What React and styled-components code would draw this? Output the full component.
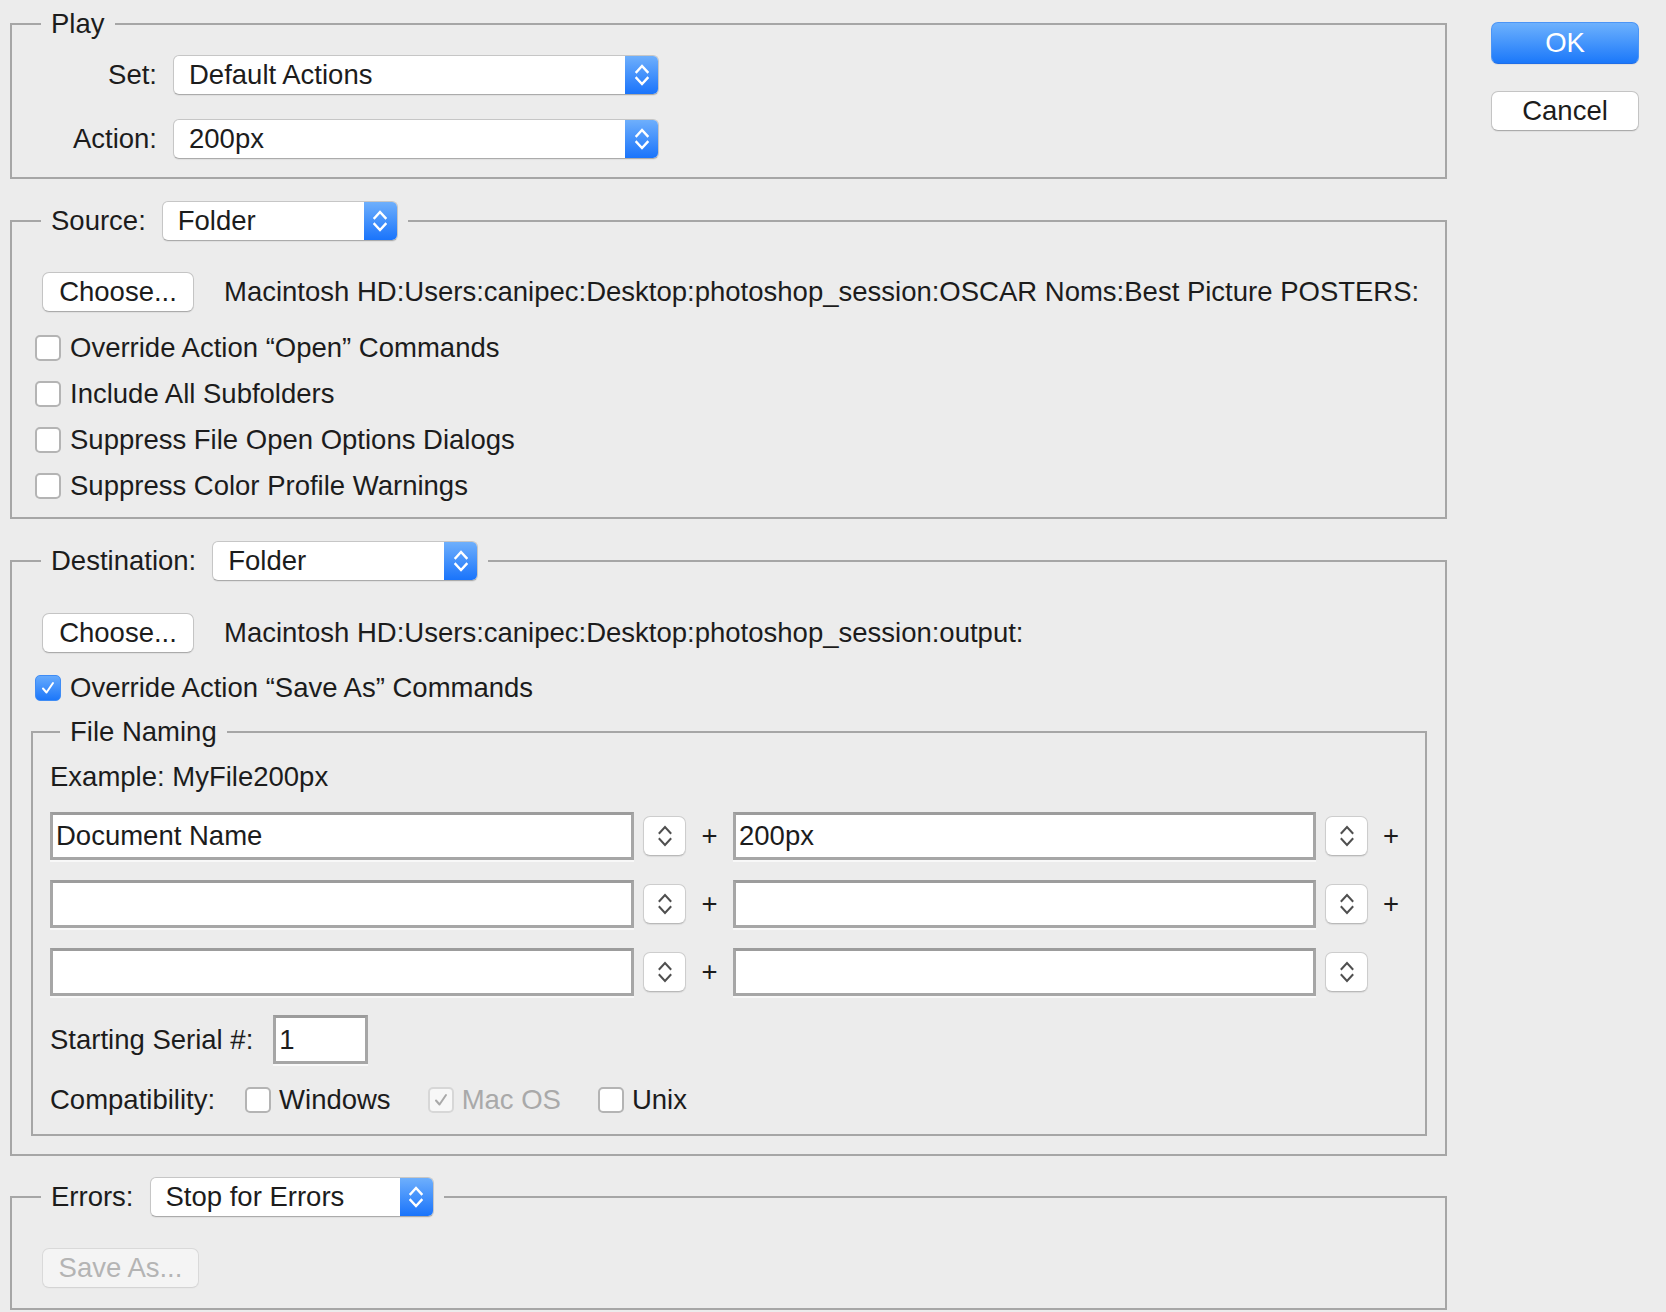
import React from 'react';
import styled, { createGlobalStyle } from 'styled-components';

const Global = createGlobalStyle`
  html, body { margin: 0; padding: 0; background: #ececec; }
  body {
    font-family: "Liberation Sans", Arial, sans-serif;
    font-size: 27.5px;
    color: #1c1c1c;
  }
  #root { width: 1666px; height: 1312px; overflow: hidden; }
`;

const Dialog = styled.div`
  display: flex;
  align-items: flex-start;
  padding-left: 10px;
  height: 1312px;
  box-sizing: border-box;
`;

const Main = styled.div`
  width: 1437px;
  display: flex;
  flex-direction: column;
`;

const Side = styled.div`
  margin-left: 44px;
  padding-top: 22px;
  width: 148px;
  display: flex;
  flex-direction: column;
  gap: 27px;
`;

const Group = styled.fieldset`
  margin: ${(p) => p.$top || 0}px ${(p) => p.$right || 0}px 0 ${(p) => p.$left || 0}px;
  padding: 0;
  border: 2px solid #a6a6a6;
  min-width: 0;
`;

const Legend = styled.legend`
  margin-left: ${(p) => p.$offset || 29}px;
  padding: 0 10px;
`;

const LegendRow = styled.span`
  display: flex;
  align-items: center;
  gap: 16px;
  line-height: 30px;
`;

const Body = styled.div`
  display: flex;
  flex-direction: column;
  padding: ${(p) => p.$pad};
`;

const FormGrid = styled.div`
  display: grid;
  grid-template-columns: 145px 486px;
  column-gap: 16px;
  row-gap: 24px;
  align-items: center;
`;

const FieldLabel = styled.span`
  text-align: right;
  line-height: 30px;
`;

const SelectBox = styled.div`
  display: flex;
  width: ${(p) => p.$w}px;
  height: 40px;
  box-sizing: border-box;
  background: #fff;
  border: 1px solid #c6c6c6;
  border-bottom-color: #ababab;
  border-radius: 6px;
  box-shadow: 0 1px 1px rgba(0, 0, 0, 0.06);
  overflow: hidden;
`;

const SelectText = styled.span`
  flex: 1;
  display: flex;
  align-items: center;
  padding-left: 15px;
  line-height: 30px;
`;

const SelectArrows = styled.span`
  width: 33px;
  display: flex;
  align-items: center;
  justify-content: center;
  background: linear-gradient(#6eaffc, #1a74fb);
`;

const Row = styled.div`
  display: flex;
  align-items: center;
  gap: ${(p) => p.$gap || 0}px;
  margin-top: ${(p) => p.$mt || 0}px;
  padding-left: ${(p) => p.$indent || 0}px;
`;

const PushButton = styled.div`
  width: ${(p) => p.$w}px;
  height: ${(p) => p.$h || 40}px;
  box-sizing: border-box;
  display: flex;
  align-items: center;
  justify-content: center;
  background: ${(p) => (p.$disabled ? '#f4f4f4' : '#fff')};
  color: ${(p) => (p.$disabled ? '#b4b4b4' : '#1c1c1c')};
  border: 1px solid ${(p) => (p.$disabled ? '#d9d9d9' : '#c4c4c4')};
  border-bottom-color: ${(p) => (p.$disabled ? '#d4d4d4' : '#ababab')};
  border-radius: 7px;
  box-shadow: 0 1px 1px rgba(0, 0, 0, ${(p) => (p.$disabled ? 0.02 : 0.06)});
  line-height: 30px;
`;

const DefaultButton = styled(PushButton)`
  background: linear-gradient(#6db1fd, #1b78fa);
  color: #fff;
  border: 1px solid #4b95f6;
  border-bottom-color: #1f6ee8;
`;

const Text = styled.span`
  line-height: 30px;
  white-space: nowrap;
  color: ${(p) => (p.$muted ? '#a9a9a9' : 'inherit')};
`;

const CheckList = styled.div`
  display: flex;
  flex-direction: column;
  gap: 16px;
  margin-top: ${(p) => p.$mt || 0}px;
  padding-left: ${(p) => p.$indent || 0}px;
`;

const CheckItem = styled.label`
  display: flex;
  align-items: center;
  gap: ${(p) => p.$gap || 9}px;
  height: 30px;
`;

const Box = styled.span`
  width: 26px;
  height: 26px;
  box-sizing: border-box;
  border-radius: 5px;
  display: flex;
  align-items: center;
  justify-content: center;
  flex: none;
  ${(p) =>
    p.$checked && !p.$disabled
      ? `background: linear-gradient(#66aafc, #1c77fa); border: 1px solid #3f8cf5;`
      : p.$disabled
      ? `background: #f7f7f7; border: 2px solid #d7d7d7;`
      : `background: #fff; border: 2px solid #b4b4b4;`}
`;

const NameRow = styled.div`
  display: flex;
  align-items: center;
  margin-top: ${(p) => p.$mt || 0}px;
`;

const TextField = styled.div`
  width: ${(p) => p.$w}px;
  height: ${(p) => p.$h || 48}px;
  box-sizing: border-box;
  background: #fff;
  border: 3px solid #a6a6a6;
  border-top-color: #9c9c9c;
  box-shadow: 0 2px 0 #f8f8f8;
  padding-left: 3px;
  display: flex;
  align-items: center;
  line-height: 30px;
`;

const Stepper = styled.div`
  width: 43px;
  height: 40px;
  margin-left: 9px;
  box-sizing: border-box;
  background: #fff;
  border: 1px solid #cdcdcd;
  border-bottom-color: #b9b9b9;
  border-radius: 7px;
  box-shadow: 0 1px 1px rgba(0, 0, 0, 0.08);
  display: flex;
  align-items: center;
  justify-content: center;
`;

const Plus = styled.span`
  width: ${(p) => p.$w || 47}px;
  text-align: center;
  line-height: 30px;
  visibility: ${(p) => (p.$hidden ? 'hidden' : 'visible')};
`;

const Chevrons = ({ color = '#fff', sw = 2.4 }) => (
  <svg width="14" height="26" viewBox="0 0 14 26" fill="none">
    <polyline points="1.5,10 7,4 12.5,10" stroke={color} strokeWidth={sw} strokeLinecap="square" />
    <polyline points="1.5,16 7,22 12.5,16" stroke={color} strokeWidth={sw} strokeLinecap="square" />
  </svg>
);

const Check = ({ color = '#fff' }) => (
  <svg width="16" height="16" viewBox="0 0 16 16" fill="none">
    <polyline points="3,8.5 6.5,12.5 13,3" stroke={color} strokeWidth="2" strokeLinecap="round" strokeLinejoin="round" />
  </svg>
);

const Select = ({ w, value }) => (
  <SelectBox $w={w}>
    <SelectText>{value}</SelectText>
    <SelectArrows>
      <Chevrons />
    </SelectArrows>
  </SelectBox>
);

const Checkbox = ({ checked, disabled, label, gap }) => (
  <CheckItem $gap={gap}>
    <Box $checked={checked} $disabled={disabled}>
      {checked && <Check color={disabled ? '#a9a9a9' : '#fff'} />}
    </Box>
    <Text $muted={disabled}>{label}</Text>
  </CheckItem>
);

const NamingPair = ({ w, value, plus, plusW }) => (
  <>
    <TextField $w={w}>{value}</TextField>
    <Stepper>
      <Chevrons color="#4f4f4f" sw={2} />
    </Stepper>
    <Plus $w={plusW} $hidden={!plus}>+</Plus>
  </>
);

export default function App() {
  return (
    <>
      <Global />
      <Dialog>
        <Main>
          <Group $top={9}>
            <Legend>
              <LegendRow>Play</LegendRow>
            </Legend>
            <Body $pad="16px 0 18px 0">
              <FormGrid>
                <FieldLabel>Set:</FieldLabel>
                <Select w={486} value="Default Actions" />
                <FieldLabel>Action:</FieldLabel>
                <Select w={486} value="200px" />
              </FormGrid>
            </Body>
          </Group>

          <Group $top={22}>
            <Legend $offset={29}>
              <LegendRow>
                Source:
                <Select w={236} value="Folder" />
              </LegendRow>
            </Legend>
            <Body $pad="31px 0 16px 19px">
              <Row $gap={30} $indent={11}>
                <PushButton $w={152}>Choose...</PushButton>
                <Text>Macintosh HD:Users:canipec:Desktop:photoshop_session:OSCAR Noms:Best Picture POSTERS:</Text>
              </Row>
              <CheckList $mt={21} $indent={4}>
                <Checkbox label="Override Action “Open” Commands" />
                <Checkbox label="Include All Subfolders" />
                <Checkbox label="Suppress File Open Options Dialogs" />
                <Checkbox label="Suppress Color Profile Warnings" />
              </CheckList>
            </Body>
          </Group>

          <Group $top={22}>
            <Legend>
              <LegendRow>
                Destination:
                <Select w={266} value="Folder" />
              </LegendRow>
            </Legend>
            <Body $pad="32px 18px 18px 19px">
              <Row $gap={30} $indent={11}>
                <PushButton $w={152}>Choose...</PushButton>
                <Text>Macintosh HD:Users:canipec:Desktop:photoshop_session:output:</Text>
              </Row>
              <CheckList $mt={20} $indent={4}>
                <Checkbox checked label="Override Action “Save As” Commands" />
              </CheckList>
              <Group $top={14}>
                <Legend $offset={27}>
                  <LegendRow>File Naming</LegendRow>
                </Legend>
                <Body $pad="15px 0 19px 17px">
                  <Text>Example: MyFile200px</Text>
                  <NameRow $mt={20}>
                    <NamingPair w={584} value="Document Name" plus />
                    <NamingPair w={583} value="200px" plus plusW={46} />
                  </NameRow>
                  <NameRow $mt={20}>
                    <NamingPair w={584} value="" plus />
                    <NamingPair w={583} value="" plus plusW={46} />
                  </NameRow>
                  <NameRow $mt={20}>
                    <NamingPair w={584} value="" plus />
                    <NamingPair w={583} value="" plusW={46} />
                  </NameRow>
                  <Row $mt={19} $gap={20}>
                    <Text>Starting Serial #:</Text>
                    <TextField $w={95} $h={49}>1</TextField>
                  </Row>
                  <Row $mt={21}>
                    <Text>Compatibility:</Text>
                    <Row $gap={37} $indent={30}>
                      <Checkbox gap={8} label="Windows" />
                      <Checkbox gap={8} checked disabled label="Mac OS" />
                      <Checkbox gap={8} label="Unix" />
                    </Row>
                  </Row>
                </Body>
              </Group>
            </Body>
          </Group>

          <Group $top={21}>
            <Legend>
              <LegendRow>
                Errors:
                <Select w={284} value="Stop for Errors" />
              </LegendRow>
            </Legend>
            <Body $pad="31px 0 20px 30px">
              <PushButton $w={157} $disabled>
                Save As...
              </PushButton>
            </Body>
          </Group>
        </Main>

        <Side>
          <DefaultButton $w={148} $h={42}>
            OK
          </DefaultButton>
          <PushButton $w={148}>Cancel</PushButton>
        </Side>
      </Dialog>
    </>
  );
}
